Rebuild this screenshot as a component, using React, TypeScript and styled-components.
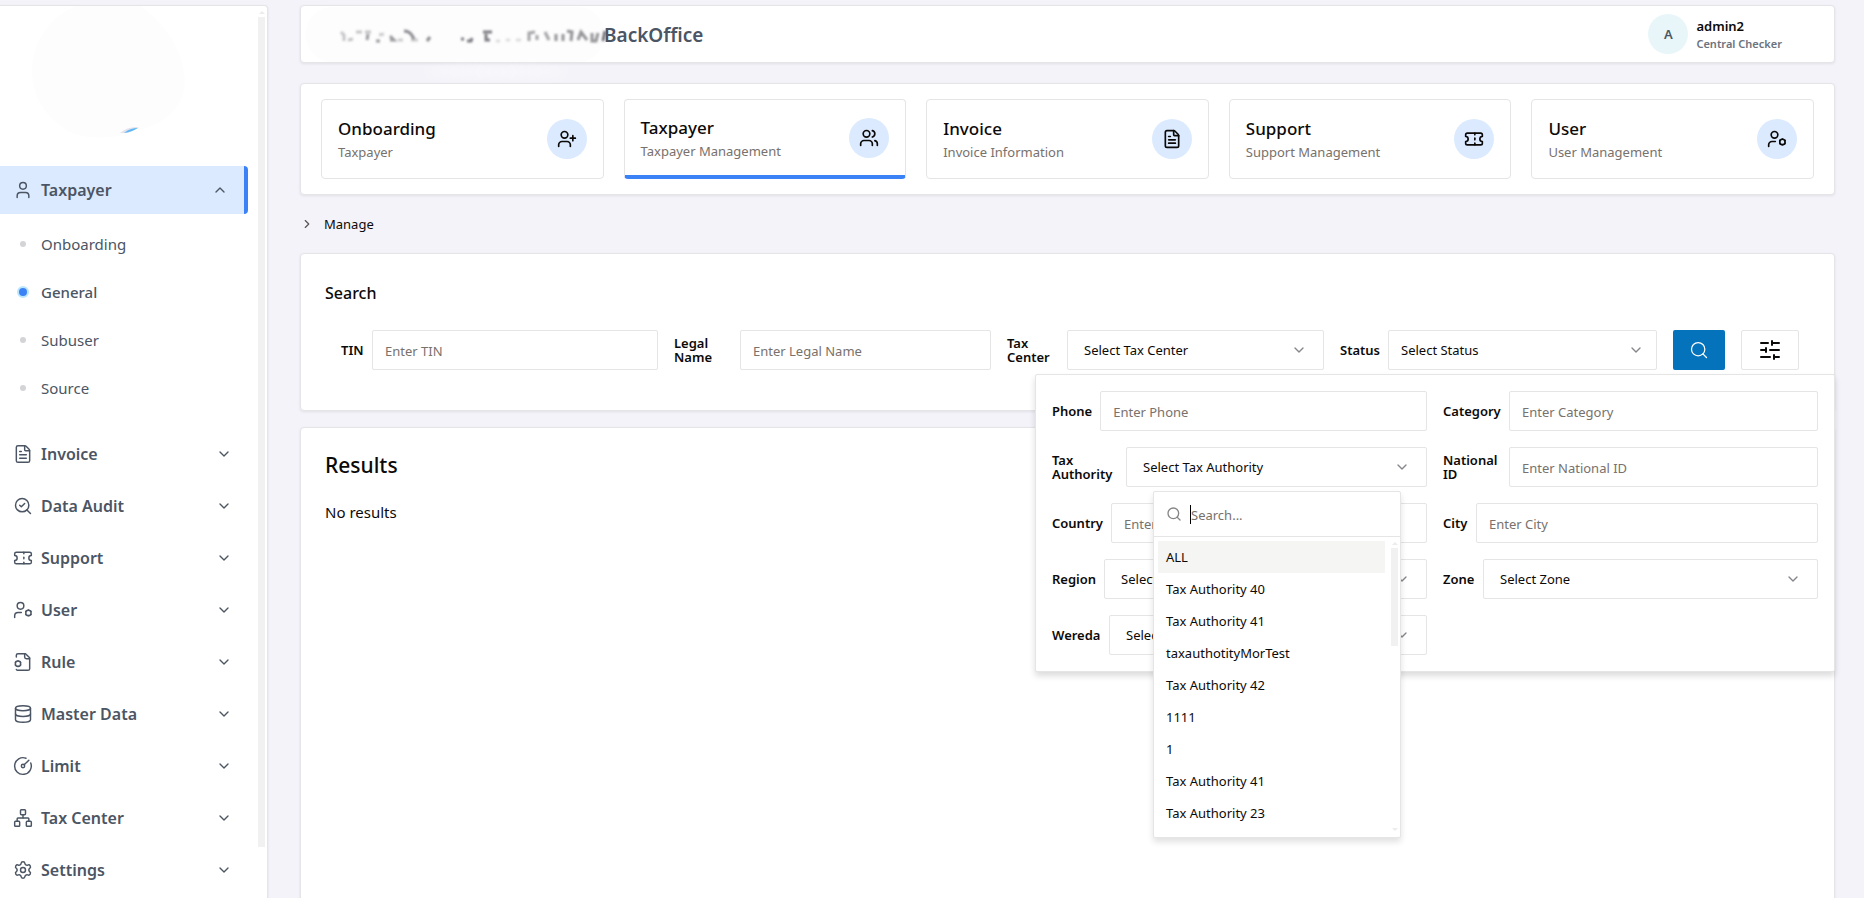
import React from 'react';
import styled, { createGlobalStyle, css } from 'styled-components';
import {
  ChevronDown,
  ChevronRight,
  ChevronUp,
  CircleGauge,
  Database,
  FileText,
  Network,
  Search,
  SearchCheck,
  Settings,
  SlidersHorizontal,
  Ticket,
  User,
  UserPlus,
  Users,
} from 'lucide-react';

const Global = createGlobalStyle`
  *, *::before, *::after { box-sizing: border-box; }
  body {
    margin: 0;
    background: #f4f3f9;
    color: #0c0a09;
    font-family: "Noto Sans", "Open Sans", sans-serif;
    font-size: 13px;
  }
  button, input, select { font: inherit; color: inherit; }
  h1, h2, p, ul { margin: 0; padding: 0; }
  ul { list-style: none; }
`;

const Page = styled.div`
  display: flex;
  gap: 32px;
  height: 100vh;
  padding-top: 5px;
  overflow: hidden;
`;

const Sidebar = styled.aside`
  display: flex;
  flex: 0 0 268px;
  min-height: 920px;
  background: #fff;
  border: 1px solid #e5e5e8;
  border-left: 0;
  border-radius: 0 4px 0 0;
  box-shadow: 0 1px 3px rgba(0, 0, 0, 0.08);
`;

const SideContent = styled.div`
  flex: 1;
  padding-right: 10px;
`;

const Logo = styled.svg`
  display: block;
  width: 100%;
  height: 160px;
`;

const SideGroup = styled.button<{ $open?: boolean }>`
  display: flex;
  align-items: center;
  gap: 8px;
  width: 100%;
  height: ${(p) => (p.$open ? 48 : 52)}px;
  padding: 0 16px 0 13px;
  border: 0;
  background: ${(p) => (p.$open ? '#dbeafe' : 'transparent')};
  color: #4b5563;
  font-size: 16px;
  font-weight: 600;
  text-align: left;
  ${(p) =>
    p.$open &&
    css`
      border-right: 4px solid #3b82f6;
      border-radius: 0 4px 4px 0;
    `}
  span { flex: 1; }
`;

const SubList = styled.ul`
  padding: 6px 0 16px;
`;

const SubLink = styled.a<{ $active?: boolean }>`
  display: flex;
  align-items: center;
  gap: 12px;
  height: 48px;
  padding-left: 17px;
  color: #4b5563;
  font-size: 15px;
  font-weight: ${(p) => (p.$active ? 500 : 400)};
  text-decoration: none;
`;

const Dot = styled.i<{ $active?: boolean }>`
  width: ${(p) => (p.$active ? 12 : 6)}px;
  height: ${(p) => (p.$active ? 12 : 6)}px;
  margin: 0 ${(p) => (p.$active ? 0 : 3)}px;
  border-radius: 50%;
  background: ${(p) => (p.$active ? '#3b82f6' : '#d4d4d8')};
  border: ${(p) => (p.$active ? '2px solid #bae6fd' : '0')};
`;

const Track = styled.div`
  display: flex;
  flex-direction: column;
  align-items: center;
  gap: 3px;
  width: 7px;
`;

const Arrow = styled.i<{ $down?: boolean }>`
  border: 3px solid transparent;
  border-top-width: ${(p) => (p.$down ? 3 : 0)}px;
  border-bottom-width: ${(p) => (p.$down ? 0 : 3)}px;
  border-${(p) => (p.$down ? 'top' : 'bottom')}-color: #ececec;
`;

const Thumb = styled.div<{ $grow: number }>`
  flex: ${(p) => p.$grow} 0 0;
  width: 100%;
  background: #f1f1f1;
`;

const Rest = styled.div<{ $grow: number }>`
  flex: ${(p) => p.$grow} 0 0;
`;

const SideTrack = styled(Track)`
  margin: 5px 2px 0 0;
`;

const Main = styled.main`
  display: flex;
  flex: 1;
  flex-direction: column;
  min-width: 0;
  padding-right: 29px;
`;

const Panel = styled.section`
  flex-shrink: 0;
  background: #fff;
  border: 1px solid #e5e5e8;
  border-radius: 4px;
  box-shadow: 0 1px 3px rgba(0, 0, 0, 0.08);
`;

const Header = styled(Panel).attrs({ as: 'header' })`
  display: flex;
  align-items: center;
  height: 58px;
  margin-bottom: 20px;
  padding: 0 52px 0 5px;
`;

const Smudge = styled.svg`
  width: 298px;
  height: 56px;
  overflow: visible;
`;

const Brand = styled.h1`
  flex: 1;
  padding-top: 2px;
  color: #4b5563;
  font-size: 19px;
  font-weight: 600;
`;

const Account = styled.div`
  display: grid;
  grid-template-columns: 40px auto;
  column-gap: 8px;
  align-items: center;
`;

const Avatar = styled.span`
  display: grid;
  place-items: center;
  width: 40px;
  height: 40px;
  border-radius: 50%;
  background: #e8f6fa;
  color: #4b5563;
  font-weight: 600;
`;

const AccountName = styled.p`
  padding-top: 2px;
  font-weight: 600;
  line-height: 18px;
`;

const AccountRole = styled.p`
  color: #6b7280;
  font-size: 11px;
  font-weight: 600;
  line-height: 18px;
`;

const Tiles = styled(Panel).attrs({ as: 'nav' })`
  display: grid;
  grid-template-columns: repeat(5, 1fr);
  gap: 20px;
  padding: 15px 20px;
`;

const Tile = styled.button<{ $active?: boolean }>`
  display: flex;
  align-items: center;
  justify-content: space-between;
  height: 80px;
  padding: 0 16px;
  background: #fff;
  border: 1px solid #e5e5e5;
  border-radius: 4px;
  text-align: left;
  ${(p) => p.$active && css`border-bottom: 4px solid #3b82f6;`}
`;

const TileLabel = styled.span`
  padding-top: 2px;
`;

const TileTitle = styled.span`
  display: block;
  font-size: 17px;
  font-weight: 500;
  line-height: 24px;
`;

const TileText = styled.span`
  display: block;
  color: #78716c;
  line-height: 22px;
`;

const TileIcon = styled.span`
  display: grid;
  place-items: center;
  width: 40px;
  height: 40px;
  border-radius: 50%;
  background: #dbeafe;
`;

const Crumb = styled.button`
  display: flex;
  flex-shrink: 0;
  align-items: center;
  align-self: flex-start;
  gap: 10px;
  height: 58px;
  padding: 0;
  border: 0;
  background: none;
  svg { color: #57534e; }
`;

const SearchPanel = styled(Panel)`
  position: relative;
  height: 158px;
  margin-bottom: 16px;
  padding: 24px 35px 0 24px;
`;

const SearchTitle = styled.h2`
  font-size: 16px;
  font-weight: 500;
  line-height: 30px;
`;

const SearchForm = styled.form`
  display: flex;
  gap: 16px;
  margin-top: 22px;
  padding-left: 16px;
`;

const FieldBox = styled.div`
  display: flex;
  flex: 1;
  align-items: center;
  gap: 8px;
  min-width: 0;
`;

const Label = styled.label<{ $w: number }>`
  flex: 0 0 ${(p) => p.$w}px;
  font-weight: 600;
  line-height: 14px;
`;

const Input = styled.input`
  flex: 1;
  min-width: 0;
  height: 40px;
  padding: 2px 12px 0;
  background: #fff;
  border: 1px solid #e5e5e5;
  border-radius: 2px;
  outline: 0;
  &::placeholder { color: #78716c; opacity: 1; }
`;

const SelectBox = styled.div<{ $inset: number }>`
  display: grid;
  flex: 1;
  align-items: center;
  min-width: 0;
  > * { grid-area: 1 / 1; }
  > svg {
    justify-self: end;
    margin-right: ${(p) => p.$inset + 1}px;
    color: #85858b;
    pointer-events: none;
  }
`;

const Select = styled.select<{ $inset: number }>`
  width: 100%;
  height: 40px;
  padding: 0 ${(p) => p.$inset}px;
  appearance: none;
  background: #fff;
  border: 1px solid #e5e5e5;
  border-radius: 2px;
`;

const SearchButton = styled.button`
  display: grid;
  place-items: center;
  width: 52px;
  height: 40px;
  padding: 0;
  border: 0;
  border-radius: 2px;
  background: #0573bb;
  color: #fff;
`;

const FilterButton = styled(SearchButton)`
  width: 58px;
  background: #fff;
  border: 1px solid #e5e5e5;
  color: #0c0a09;
`;

const Filters = styled.div`
  position: absolute;
  z-index: 1;
  top: 120px;
  right: -1px;
  display: grid;
  grid-template-columns: 1fr 1fr;
  gap: 16px;
  width: 800px;
  padding: 16px;
  background: #fff;
  border: 1px solid #e5e5e5;
  border-radius: 2px;
  box-shadow: 0 4px 6px rgba(0, 0, 0, 0.14);
`;

const Menu = styled.div`
  position: absolute;
  z-index: 2;
  top: 116px;
  left: 117px;
  width: 248px;
  background: #fff;
  border: 1px solid #e5e5e5;
  border-radius: 2px;
  box-shadow: 0 4px 6px rgba(0, 0, 0, 0.12);
`;

const MenuSearch = styled.label`
  display: flex;
  align-items: center;
  height: 45px;
  padding-left: 12px;
  border-bottom: 1px solid #e5e5e5;
  svg { color: #858585; }
`;

const Caret = styled.i`
  width: 1px;
  height: 19px;
  margin-left: 8px;
  background: #000;
`;

const MenuInput = styled.input`
  flex: 1;
  min-width: 0;
  padding: 2px 0 0;
  border: 0;
  outline: 0;
  background: none;
  &::placeholder { color: #78716c; opacity: 1; }
`;

const MenuBody = styled.div`
  display: flex;
  height: 300px;
  padding: 4px 2px 6px 4px;
`;

const Options = styled.ul`
  flex: 1;
  margin-right: 6px;
`;

const Option = styled.li<{ $active?: boolean }>`
  height: 32px;
  padding-left: 8px;
  background: ${(p) => (p.$active ? '#f5f5f4' : 'transparent')};
  line-height: 32px;
`;

const MenuTrack = styled(Track)`
  padding-top: 1px;
`;

const Results = styled(Panel)`
  flex: 1 0 500px;
  padding: 16px 24px;
`;

const ResultsTitle = styled.h2`
  font-size: 21px;
  font-weight: 500;
  line-height: 42px;
`;

const ResultsText = styled.p`
  margin-top: 14px;
  font-size: 15px;
  line-height: 24px;
`;

type IconProps = { size?: number; strokeWidth?: number };

const FileCogIcon = ({ size = 20, strokeWidth = 2 }: IconProps) => (
  <svg width={size} height={size} viewBox="0 0 24 24" fill="none" stroke="currentColor" strokeWidth={strokeWidth} strokeLinecap="round" strokeLinejoin="round">
    <path d="M14 2v4a2 2 0 0 0 2 2h4" />
    <path d="M4 6V4a2 2 0 0 1 2-2h9l5 5v13a2 2 0 0 1-2 2H6a2 2 0 0 1-2-1" />
    <circle cx="6" cy="14" r="3.200" />
    <path d="M6 9.600v1M6 17.400v1M9.800 11.800l-.9.500M3.100 15.700l-.9.500M9.800 16.200l-.9-.5M3.100 12.300l-.9-.5" strokeLinecap="butt" />
  </svg>
);

const UserCogIcon = ({ size = 20, strokeWidth = 2 }: IconProps) => (
  <svg width={size} height={size} viewBox="0 0 24 24" fill="none" stroke="currentColor" strokeWidth={strokeWidth} strokeLinecap="round" strokeLinejoin="round">
    <circle cx="9" cy="7" r="4" />
    <path d="M10 15H6a4 4 0 0 0-4 4v2" />
    <circle cx="18.500" cy="15.500" r="3.200" />
    <path d="M18.500 11.100v1M18.500 18.900v1M22.300 13.300l-.9.500M15.600 17.200l-.9.500M22.300 17.700l-.9-.5M15.600 13.800l-.9-.5" strokeLinecap="butt" />
  </svg>
);

const groups = [
  { name: 'Invoice', Icon: FileText },
  { name: 'Data Audit', Icon: SearchCheck },
  { name: 'Support', Icon: Ticket },
  { name: 'User', Icon: UserCogIcon },
  { name: 'Rule', Icon: FileCogIcon },
  { name: 'Master Data', Icon: Database },
  { name: 'Limit', Icon: CircleGauge },
  { name: 'Tax Center', Icon: Network },
  { name: 'Settings', Icon: Settings },
];

const tiles = [
  { title: 'Onboarding', text: 'Taxpayer', Icon: UserPlus },
  { title: 'Taxpayer', text: 'Taxpayer Management', Icon: Users, active: true },
  { title: 'Invoice', text: 'Invoice Information', Icon: FileText },
  { title: 'Support', text: 'Support Management', Icon: Ticket },
  { title: 'User', text: 'User Management', Icon: UserCogIcon },
];

const authorities = [
  'ALL', 'Tax Authority 40', 'Tax Authority 41', 'taxauthotityMorTest', 'Tax Authority 42',
  '1111', '1', 'Tax Authority 41', 'Tax Authority 23',
];

type FieldProps = { id: string; label: string; w: number };

const TextField = ({ id, label, w }: FieldProps) => (
  <FieldBox>
    <Label $w={w} htmlFor={id}>{label}</Label>
    <Input id={id} placeholder={`Enter ${label}`} />
  </FieldBox>
);

const SelectField = ({ id, label, w, inset = 16 }: FieldProps & { inset?: number }) => (
  <FieldBox>
    <Label $w={w} htmlFor={id}>{label}</Label>
    <SelectBox $inset={inset}>
      <Select id={id} $inset={inset}>
        <option>{`Select ${label}`}</option>
      </Select>
      <ChevronDown size={16} />
    </SelectBox>
  </FieldBox>
);

export default function App() {
  return (
    <>
      <Global />
      <Page>
        <Sidebar>
          <SideContent>
            <Logo viewBox="0 0 257 160" preserveAspectRatio="xMinYMin slice" aria-hidden="true">
              <path d="M75 0H140C170 22 185 50 185 78C182 108 155 122 130 126C115 133 85 134 68 125C42 108 32 88 32 62C33 36 50 12 75 0Z" fill="#fdfdfd" />
              <path d="M120 127Q128 120 139 121L128 127Z" fill="#e4e2ee" />
              <path d="M124 127Q130 122 138 122Q132 126 124 127Z" fill="#5bb8f5" />
            </Logo>
            <SideGroup $open>
              <User size={20} strokeWidth={1.75} />
              <span>Taxpayer</span>
              <ChevronUp size={16} />
            </SideGroup>
            <SubList>
              {['Onboarding', 'General', 'Subuser', 'Source'].map((name) => (
                <li key={name}>
                  <SubLink href="#" $active={name === 'General'}>
                    <Dot $active={name === 'General'} />
                    {name}
                  </SubLink>
                </li>
              ))}
            </SubList>
            {groups.map(({ name, Icon }) => (
              <SideGroup key={name}>
                <Icon size={20} strokeWidth={1.75} />
                <span>{name}</span>
                <ChevronDown size={16} />
              </SideGroup>
            ))}
          </SideContent>
          <SideTrack aria-hidden="true">
            <Arrow />
            <Thumb $grow={831} />
            <Rest $grow={74} />
          </SideTrack>
        </Sidebar>

        <Main>
          <Header>
            <Smudge viewBox="0 0 298 56" aria-hidden="true">
              <defs>
                <filter id="soft" x="-10%" y="-50%" width="120%" height="200%">
                  <feGaussianBlur stdDeviation="0.9" />
                </filter>
                <filter id="haze" x="-20%" y="-100%" width="140%" height="300%">
                  <feGaussianBlur stdDeviation="5" />
                </filter>
              </defs>
              <ellipse cx="190" cy="66" rx="70" ry="6" fill="#fff" opacity="0.4" filter="url(#haze)" />
              <rect x="0" y="1" width="298" height="55" rx="26" fill="#fdfdfd" />
              <g fill="none" stroke="#5c5c64" strokeWidth="3" filter="url(#soft)">
                <path d="M35 26l3 3v6M42 34l5-1M50 26h6M59 26h6" opacity="0.35" />
                <path d="M62 28l-1 6M70 35h4M84 30l4 4h-4" opacity="0.6" />
                <path d="M73 29l5-1M92 34h5M105 34h7" opacity="0.3" />
                <path d="M98 25c6 0 8 4 10 8M121 35l3-4" opacity="0.7" />
                <path d="M155 33h3M161 35h4l1-3M177 26h9M180 28v6h4" opacity="0.8" />
                <path d="M190 35h4M200 34h4M210 34h5" opacity="0.2" />
                <path d="M223 35v-8l6-1M231 29v5M239 26l4 8" opacity="0.55" />
                <path d="M250 28v7M257 28v7M261 25l5 1-1 9M272 34l3-8 6 8M286 27v8h4l2-8" opacity="0.65" />
                <path d="M297 35l2-10" opacity="0.9" />
              </g>
            </Smudge>
            <Brand>BackOffice</Brand>
            <Account>
              <Avatar>A</Avatar>
              <div>
                <AccountName>admin2</AccountName>
                <AccountRole>Central Checker</AccountRole>
              </div>
            </Account>
          </Header>

          <Tiles>
            {tiles.map(({ title, text, Icon, active }) => (
              <Tile key={title} $active={active}>
                <TileLabel>
                  <TileTitle>{title}</TileTitle>
                  <TileText>{text}</TileText>
                </TileLabel>
                <TileIcon><Icon size={20} /></TileIcon>
              </Tile>
            ))}
          </Tiles>

          <Crumb>
            <ChevronRight size={14} />
            Manage
          </Crumb>

          <SearchPanel>
            <SearchTitle>Search</SearchTitle>
            <SearchForm>
              <TextField id="tin" label="TIN" w={23} />
              <TextField id="legal" label="Legal Name" w={58} />
              <SelectField id="center" label="Tax Center" w={52} />
              <SelectField id="status" label="Status" w={39} inset={12} />
              <SearchButton type="button" aria-label="Search"><Search size={20} strokeWidth={1.5} /></SearchButton>
              <FilterButton type="button" aria-label="More filters"><SlidersHorizontal size={24} /></FilterButton>
            </SearchForm>
            <Filters>
              <TextField id="phone" label="Phone" w={40} />
              <TextField id="category" label="Category" w={58} />
              <SelectField id="authority" label="Tax Authority" w={66} />
              <TextField id="national" label="National ID" w={58} />
              <TextField id="country" label="Country" w={51} />
              <TextField id="city" label="City" w={25} />
              <SelectField id="region" label="Region" w={44} />
              <SelectField id="zone" label="Zone" w={32} />
              <SelectField id="wereda" label="Wereda" w={49} />
              <Menu>
                <MenuSearch>
                  <Search size={16} />
                  <Caret />
                  <MenuInput placeholder="Search..." aria-label="Search tax authority" />
                </MenuSearch>
                <MenuBody>
                  <Options role="listbox">
                    {authorities.map((name, i) => (
                      <Option key={i} role="option" aria-selected={i === 0} $active={i === 0}>{name}</Option>
                    ))}
                  </Options>
                  <MenuTrack aria-hidden="true">
                    <Arrow />
                    <Thumb $grow={99} />
                    <Rest $grow={177} />
                    <Arrow $down />
                  </MenuTrack>
                </MenuBody>
              </Menu>
            </Filters>
          </SearchPanel>

          <Results>
            <ResultsTitle>Results</ResultsTitle>
            <ResultsText>No results</ResultsText>
          </Results>
        </Main>
      </Page>
    </>
  );
}
